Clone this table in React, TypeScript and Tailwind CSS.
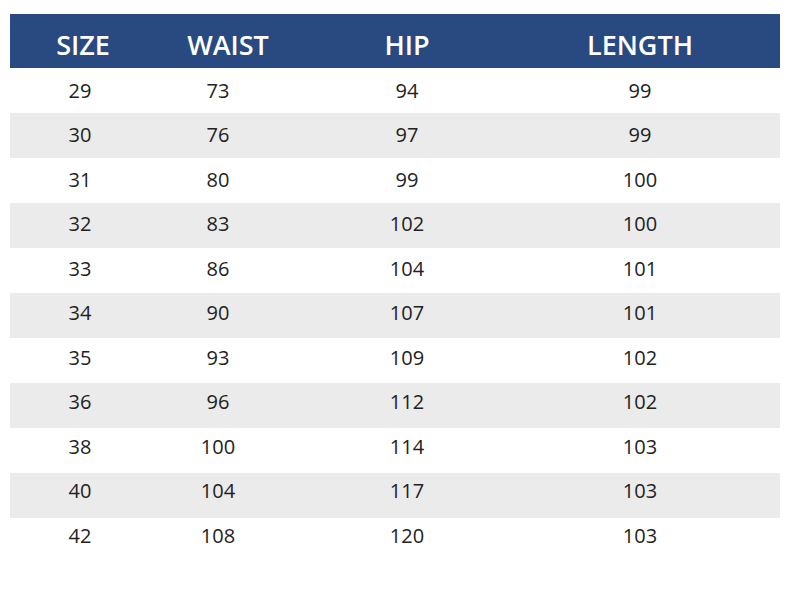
import React from "react";

const rows = [
  ["29", "73", "94", "99"],
  ["30", "76", "97", "99"],
  ["31", "80", "99", "100"],
  ["32", "83", "102", "100"],
  ["33", "86", "104", "101"],
  ["34", "90", "107", "101"],
  ["35", "93", "109", "102"],
  ["36", "96", "112", "102"],
  ["38", "100", "114", "103"],
  ["40", "104", "117", "103"],
  ["42", "108", "120", "103"],
];

export default function App() {
  return (
    <div
      className="w-[790px] h-[597px] bg-white pt-[14px] px-[10px]"
      style={{ fontFamily: '"Open Sans", sans-serif' }}
    >
      <div className="grid grid-cols-[140px_136px_242px_224px_28px] h-[54px] bg-[#284a80] text-white text-[27px] font-semibold items-center">
        <div className="text-center pl-[6px] pt-[8px]">SIZE</div>
        <div className="text-center pl-[20px] pt-[8px]">WAIST</div>
        <div className="text-center pt-[8px]">HIP</div>
        <div className="text-center pt-[8px]">LENGTH</div>
        <div />
      </div>
      {rows.map((r, i) => (
        <div
          key={i}
          className={`grid grid-cols-[140px_136px_242px_224px_28px] h-[45px] items-center text-[20px] text-[#222222] ${
            i % 2 === 1 ? "bg-[#ebebeb]" : "bg-white"
          }`}
          style={{ paddingBottom: i }}
        >
          {r.map((c, j) => (
            <div key={j} className="text-center">
              {c}
            </div>
          ))}
          <div />
        </div>
      ))}
    </div>
  );
}
